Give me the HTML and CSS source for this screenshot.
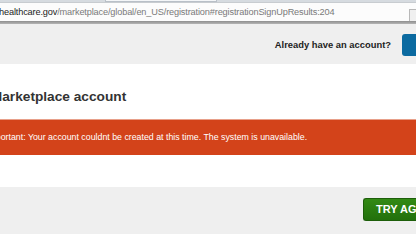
FILE: index.html
```html
<!DOCTYPE html>
<html>
<head>
<meta charset="utf-8">
<link rel="stylesheet" href="styles.css">
</head>
<body>
<div class="browser">
  <div class="tabstrip"><span class="tabedge"></span></div>
  <div class="urlbar">
    <div class="url"><span class="host">healthcare.gov</span>/marketplace/global/en_US/registration#registrationSignUpResults:204</div>
    <span class="urlbtn"></span>
  </div>
  <div class="divider"></div>
</div>
<div class="page">
  <div class="topbar">
    <span class="already">Already have an account?</span>
    <span class="login">Log in</span>
  </div>
  <div class="card">
    <h1 class="title">Create a Marketplace account</h1>
    <div class="alert">Important: Your account couldnt be created at this time. The system is unavailable.</div>
  </div>
  <div class="footer">
    <span class="try">TRY AGAIN</span>
  </div>
</div>
</body>
</html>
```
FILE: styles.css
```css
html, body {
  margin: 0;
  padding: 0;
  width: 416px;
  height: 234px;
  overflow: hidden;
  background: #efefef;
  font-family: "Liberation Sans", Arial, sans-serif;
}
.browser {
  display: flex;
  flex-direction: column;
}
.tabstrip {
  height: 2px;
  background: #d6dbe0;
  position: relative;
}
.tabedge {
  position: absolute;
  left: 105px;
  width: 110px;
  top: 0;
  height: 1px;
  background: #f4f6f8;
  border: 0 solid #b9c0c8;
  border-width: 0 1px 1px 1px;
}
.urlbar {
  height: 19px;
  background: #fcfcfc;
  border-top: 1px solid #c8ccd0;
  box-sizing: border-box;
  display: flex;
  align-items: center;
  justify-content: space-between;
}
.url {
  font-family: "Liberation Sans", Arial, sans-serif;
  font-size: 9.2px;
  letter-spacing: -0.15px;
  color: #7a7a7a;
  white-space: nowrap;
  margin-left: -1px;
}
.host {
  color: #222;
}
.urlbtn {
  width: 6px;
  height: 11px;
  margin-top: 7px;
  border: 1px solid #b8b8b8;
  border-right: 0;
  background: #f0f0f0;
  flex: none;
}
.divider {
  height: 3px;
  background: linear-gradient(#8e8e8e, #b4b4b4);
}
.page {
  display: flex;
  flex-direction: column;
}
.topbar {
  height: 40px;
  display: flex;
  align-items: center;
  justify-content: flex-end;
  gap: 11px;
  background: #efefef;
  overflow: hidden;
  white-space: nowrap;
}
.already {
  font-size: 9.4px;
  font-weight: bold;
  color: #222;
  margin-top: 1px;
}
.login {
  flex: none;
  width: 14px;
  height: 22px;
  margin-top: 1px;
  background: #0b6aa0;
  border-radius: 3px 0 0 3px;
  color: transparent;
  overflow: hidden;
  font-size: 1px;
}
.card {
  background: #fff;
  height: 123px;
  box-sizing: border-box;
  padding-top: 24px;
  overflow: hidden;
}
.title {
  margin: 0 0 14px -67px;
  font-size: 13.7px;
  font-weight: bold;
  color: #333;
  white-space: nowrap;
  line-height: 17px;
}
.alert {
  height: 36px;
  box-sizing: border-box;
  background: #d3431a;
  border-top: 1px solid #e8a08a;
  color: #fff;
  font-size: 8.8px;
  line-height: 34px;
  white-space: nowrap;
  margin-left: -14px;
}
.footer {
  height: 47px;
  display: flex;
  justify-content: flex-end;
  align-items: flex-start;
  padding-top: 11px;
  overflow: hidden;
}
.try {
  flex: none;
  width: 53px;
  height: 23px;
  box-sizing: border-box;
  padding-left: 12px;
  background: linear-gradient(#338a14, #22700c);
  border: 1px solid #1d5e0a;
  border-right: 0;
  border-radius: 3px 0 0 3px;
  color: #fff;
  font-size: 11px;
  font-weight: bold;
  line-height: 21px;
  white-space: nowrap;
  overflow: hidden;
}
```
